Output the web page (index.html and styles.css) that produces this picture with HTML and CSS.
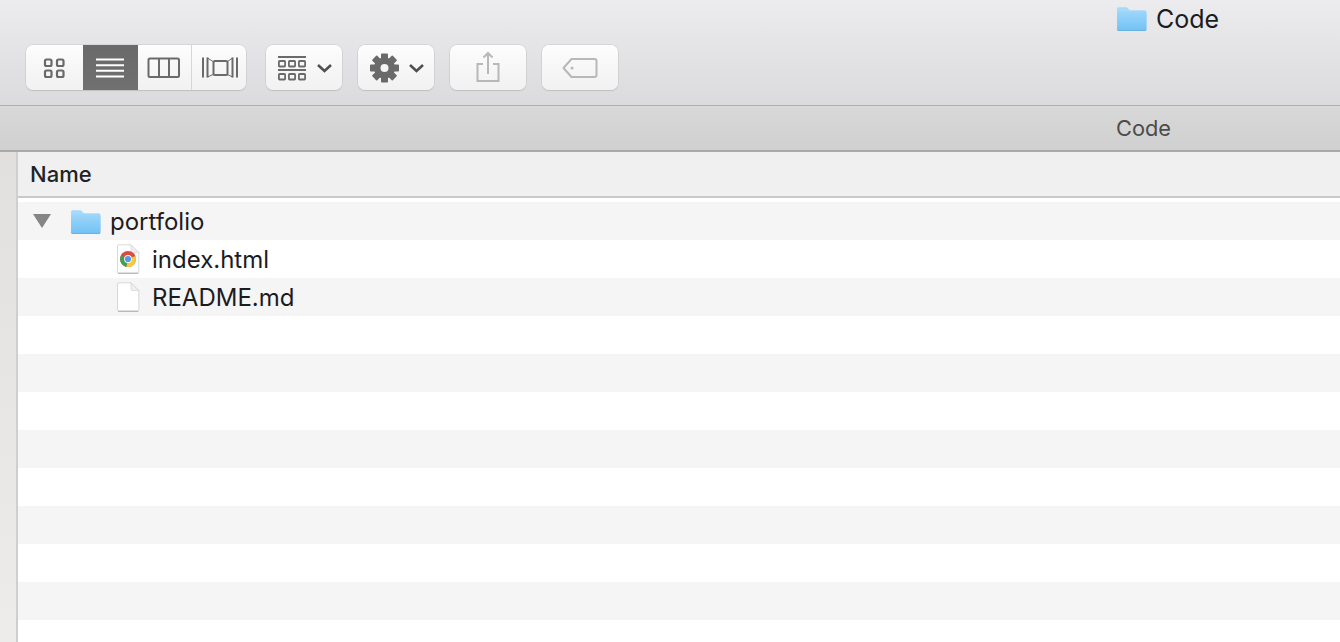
FILE: index.html
```html
<!DOCTYPE html>
<html lang="en">
<head>
<meta charset="utf-8">
<title>Code</title>
<link rel="stylesheet" href="styles.css">
</head>
<body>
<svg class="defs" width="0" height="0" aria-hidden="true">
  <defs>
    <linearGradient id="fold" x1="0" y1="0" x2="0" y2="1"><stop offset="0" stop-color="#9dd6fa"/><stop offset="1" stop-color="#72c2f6"/></linearGradient>
    <symbol id="folder" viewBox="0 0 30 24">
      <path d="M1 22V2.500Q1 1 2.500 1H10.500L13.500 4H27.500Q29.500 4 29.500 6V22Q29.500 23.500 28 23.500H2.500Q1 23.500 1 22Z" fill="#a5dafb"/>
      <path d="M1 22V6.500Q1 5 2.500 5H28Q29.500 5 29.500 6.500V22Q29.500 23.500 28 23.500H2.500Q1 23.500 1 22Z" fill="url(#fold)"/>
      <path d="M1 22.800Q1.300 23.600 2.500 23.600H28Q29.200 23.600 29.500 22.800" fill="none" stroke="#5fa9d8" stroke-width=".8"/>
    </symbol>
    <symbol id="doc" viewBox="0 0 24 30">
      <path d="M1.500 2Q1.500 .8 2.700 .8H15L22.800 8.600V27.800Q22.800 29 21.600 29H2.700Q1.500 29 1.500 27.800Z" fill="#fff" stroke="#cfcfcf" stroke-width=".8"/>
      <path d="M15 .8V7Q15 8.600 16.600 8.600H22.800Z" fill="#efefef" stroke="#cfcfcf" stroke-width=".6"/>
      <path d="M2 29.300H22.300" stroke="#a8a8a8" stroke-width=".9"/>
    </symbol>
  </defs>
</svg>
<div class="window">
  <header class="toolbar">
    <div class="title">
      <svg class="folder-title"><use href="#folder"/></svg>
      <span>Code</span>
    </div>
    <div class="tools">
      <div class="segmented">
        <div class="seg seg-a">
          <svg width="57" height="45" viewBox="0 0 57 45" fill="none" stroke="#6a6a6a" stroke-width="2.200"><rect x="19" y="14.500" width="6.500" height="6.500" rx="1.500"/><rect x="31" y="14.500" width="6.500" height="6.500" rx="1.500"/><rect x="19" y="25.500" width="6.500" height="6.500" rx="1.500"/><rect x="31" y="25.500" width="6.500" height="6.500" rx="1.500"/></svg>
        </div>
        <div class="seg seg-b active">
          <svg width="55" height="45" viewBox="0 0 55 45" stroke="#fff" stroke-width="2"><path d="M13 14.500H41M13 20.200H41M13 25.800H41M13 31.500H41"/></svg>
        </div>
        <div class="seg seg-c">
          <svg width="54" height="45" viewBox="0 0 54 45" fill="none" stroke="#6a6a6a" stroke-width="2"><rect x="10.500" y="13.500" width="30.500" height="18.500" rx="1.500"/><path d="M21 13.500V32M31 13.500V32"/></svg>
        </div>
        <div class="seg seg-d">
          <svg width="54" height="45" viewBox="0 0 54 45" fill="none" stroke="#6a6a6a" stroke-width="2"><rect x="21.500" y="16" width="14" height="14" rx="1.500"/><path d="M11 12.500V32.500M15.500 12.500V32.500M40.500 12.500V32.500M45 12.500V32.500"/><path d="M15.500 13L21 16.500M15.500 32L21 29.500M40.500 13L35.500 16.500M40.500 32L35.500 29.500" stroke-width="1"/></svg>
        </div>
      </div>
      <div class="btn">
        <svg width="76" height="45" viewBox="0 0 76 45" fill="none" stroke="#6a6a6a"><path d="M12 12H40M12 25H40" stroke-width="1.800"/><g stroke-width="1.800"><rect x="12.900" y="16" width="6.200" height="5.500" rx=".7"/><rect x="22.900" y="16" width="6.200" height="5.500" rx=".7"/><rect x="32.900" y="16" width="6.200" height="5.500" rx=".7"/><rect x="12.900" y="29" width="6.200" height="5.500" rx=".7"/><rect x="22.900" y="29" width="6.200" height="5.500" rx=".7"/><rect x="32.900" y="29" width="6.200" height="5.500" rx=".7"/></g><path d="M52 20L58.500 26L65 20" stroke="#505050" stroke-width="2.600"/></svg>
      </div>
      <div class="btn">
        <svg width="76" height="45" viewBox="0 0 76 45" fill="none"><g fill="#6a6a6a"><circle cx="26.500" cy="23" r="10.500"/><rect x="23" y="8.500" width="7" height="29" rx=".8"/><rect x="23" y="8.500" width="7" height="29" rx=".8" transform="rotate(45 26.500 23)"/><rect x="23" y="8.500" width="7" height="29" rx=".8" transform="rotate(90 26.500 23)"/><rect x="23" y="8.500" width="7" height="29" rx=".8" transform="rotate(135 26.500 23)"/></g><circle cx="26.500" cy="23" r="4" fill="#f5f5f5"/><path d="M52 20L58.500 26L65 20" stroke="#505050" stroke-width="2.600"/></svg>
      </div>
      <div class="btn">
        <svg width="76" height="45" viewBox="0 0 76 45" fill="none" stroke="#b8b8b8" stroke-width="2"><path d="M33 19H27.500V36H48.500V19H43"/><path d="M38 29V8.500M33.500 12.500L38 8L42.500 12.500"/></svg>
      </div>
      <div class="btn">
        <svg width="76" height="45" viewBox="0 0 76 45" fill="none" stroke="#b8b8b8" stroke-width="2"><path d="M29.500 14H52.500Q54.500 14 54.500 16V30Q54.500 32 52.500 32H29.500L21.500 23Z" stroke-linejoin="round"/><circle cx="30" cy="23" r="1.500" fill="#b8b8b8" stroke="none"/></svg>
      </div>
    </div>
  </header>
  <div class="pathbar"><span>Code</span></div>
  <div class="main">
    <aside class="sidebar"></aside>
    <section class="list">
      <div class="head">Name</div>
      <div class="rows">
        <div class="row row-parent">
          <svg class="disclosure" viewBox="0 0 18 14"><path d="M0 0H18L9 14Z" fill="#858585"/></svg>
          <svg class="folder"><use href="#folder"/></svg>
          <span>portfolio</span>
        </div>
        <div class="row row-child">
          <span class="doc-wrap">
            <svg class="doc"><use href="#doc"/></svg>
            <svg class="chrome" viewBox="0 0 16 16">
              <circle cx="8" cy="8" r="8" fill="#dd4b3d"/>
              <path d="M8 8L1 4.500A8 8 0 0 0 6.500 15.900Z" fill="#3ba354"/>
              <path d="M8 8L6.500 15.900A8 8 0 0 0 15.800 6.500L15.500 5Z" fill="#f6c93e"/>
              <circle cx="8" cy="8" r="3.900" fill="#fff"/>
              <circle cx="8" cy="8" r="3.100" fill="#5a95ec"/>
            </svg>
          </span>
          <span>index.html</span>
        </div>
        <div class="row row-child">
          <span class="doc-wrap"><svg class="doc"><use href="#doc"/></svg></span>
          <span>README.md</span>
        </div>
        <div class="row"></div><div class="row"></div><div class="row"></div>
        <div class="row"></div><div class="row"></div><div class="row"></div>
        <div class="row"></div><div class="row"></div>
      </div>
    </section>
  </div>
</div>
</body>
</html>
```
FILE: styles.css
```css
* { box-sizing: border-box; }
html, body { margin: 0; height: 100%; overflow: hidden; }
body { font-family: "Inter", "Liberation Sans", sans-serif; color: #1c1c1e; background: #fff; }
.defs { position: absolute; }
svg { display: block; flex: none; }
.window { height: 642px; display: flex; flex-direction: column; }

.toolbar { height: 106px; background: linear-gradient(#ececee, #dbdbdd); border-bottom: 1px solid #b0afaf; flex: none; }
.title { height: 38px; padding: 5px 0 0 1116px; display: flex; align-items: flex-start; gap: 9px; font-size: 25px; line-height: 28px; }
.folder-title { width: 31px; height: 25px; margin-top: 1px; }
.tools { display: flex; gap: 15px; padding: 7px 0 0 26px; }

.segmented, .btn { height: 45px; border-radius: 7px; background: linear-gradient(#fdfdfd, #f1f1f1); box-shadow: 0 0 0 .5px #c6c6c6, 0 1px 1px #bdbdbd; }
.segmented { display: flex; overflow: hidden; width: 220px; margin-right: 5px; }
.seg-a { width: 57px; }
.seg-b { width: 55px; }
.seg-c { width: 54px; border-right: 1px solid #d6d6d6; }
.seg-d { width: 54px; }
.active { background: linear-gradient(#6a6a6a, #707070); }
.btn { width: 76px; margin-right: 1px; }

.pathbar { height: 46px; flex: none; background: linear-gradient(#d8d8d8, #d0d0d0); border-bottom: 2px solid #a9a9a9; padding: 8px 0 0 1116px; color: #4c4c4c; font-size: 21.800px; line-height: 28px; }

.main { flex: 1; display: flex; min-height: 0; }
.sidebar { width: 18px; flex: none; background: linear-gradient(#e2e0de, #eeecea); border-right: 2px solid #d1cfcd; }
.list { flex: 1; min-width: 0; }
.head { height: 46px; background: #f0f0f0; border-bottom: 2px solid #c9c9c9; padding: 0 0 1px 12px; display: flex; align-items: center; font-size: 22px; font-weight: 500; color: #20232a; }
.rows { padding-top: 4px; }
.row { height: 38px; display: flex; align-items: center; font-size: 24px; }
.row:nth-child(odd) { background: #f5f5f5; }
.row-parent { padding-left: 15px; }
.disclosure { width: 18px; height: 14px; margin-right: 20px; }
.folder { width: 31px; height: 25px; margin-right: 9px; margin-left: -1px; }
.row-child { padding-left: 98px; }
.doc-wrap { position: relative; width: 24px; height: 30px; margin-right: 12px; flex: none; }
.doc { width: 24px; height: 30px; }
.chrome { position: absolute; left: 4px; top: 7px; width: 16px; height: 16px; }
```
